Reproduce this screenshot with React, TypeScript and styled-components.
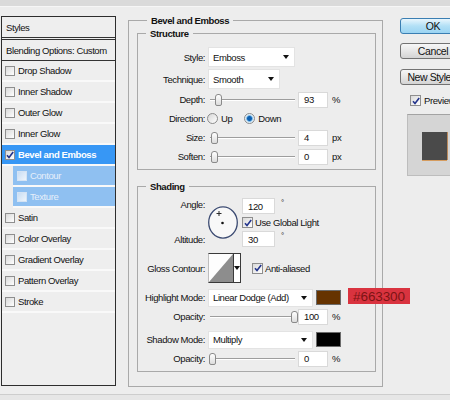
import React from 'react'
import styled, { createGlobalStyle } from 'styled-components'

const GlobalStyle = createGlobalStyle`
  html, body {
    margin: 0;
    padding: 0;
  }

  body {
    font-family: 'Liberation Sans', Arial, sans-serif;
    font-size: 9.5px;
    letter-spacing: -0.4px;
    color: #111;
    background: #ededed;
  }
`

const styleItems = [
  { label: 'Drop Shadow' },
  { label: 'Inner Shadow' },
  { label: 'Outer Glow' },
  { label: 'Inner Glow' },
  { label: 'Bevel and Emboss', active: true, checked: true },
  { label: 'Contour', sub: true },
  { label: 'Texture', sub: true },
  { label: 'Satin' },
  { label: 'Color Overlay' },
  { label: 'Gradient Overlay' },
  { label: 'Pattern Overlay' },
  { label: 'Stroke' },
]

function Check({ checked = false, size = 10, light = false }: { checked?: boolean; size?: number; light?: boolean }) {
  return (
    <CheckBox $size={size} $light={light}>
      {checked && (
        <svg width="8" height="8" viewBox="0 0 8 8">
          <path d="M1 4.3 L3 6.6 L7.2 1" fill="none" stroke="#23348c" strokeWidth="1.6" />
        </svg>
      )}
    </CheckBox>
  )
}

function Dropdown({ value, width, height = 20 }: { value: string; width: number; height?: number }) {
  return (
    <Select $w={width} $h={height}>
      <span>{value}</span>
      <Arrow />
    </Select>
  )
}

function SliderField({ thumb, value, unit }: { thumb: number; value: string; unit: string }) {
  return (
    <>
      <Slider>
        <Thumb $left={thumb} />
      </Slider>
      <Field $w={30}>{value}</Field>
      <Unit>{unit}</Unit>
    </>
  )
}

export default function App() {
  return (
    <>
      <GlobalStyle />
      <Dialog>
        <TopBand />
        <Body>
          <StylesPanel>
            <PanelHeader>Styles</PanelHeader>
            <BlendingRow>Blending Options: Custom</BlendingRow>
            {styleItems.map((item) => (
              <StyleRow key={item.label} $active={item.active} $sub={item.sub}>
                <Check checked={item.checked} light={item.sub} />
                <span>{item.label}</span>
              </StyleRow>
            ))}
          </StylesPanel>

          <Group $w={255} $h={373} $pad="0 6px 0 8px">
            <Legend $indent={10}>Bevel and Emboss</Legend>

            <Group $pad="7px 0 3px 0">
              <Legend $indent={8}>Structure</Legend>
              <Row $h={20}>
                <Label>Style:</Label>
                <Dropdown value="Emboss" width={87} />
              </Row>
              <Row $h={20} $mt={2}>
                <Label>Technique:</Label>
                <Dropdown value="Smooth" width={72} />
              </Row>
              <Row $mt={1}>
                <Label>Depth:</Label>
                <SliderField thumb={7} value="93" unit="%" />
              </Row>
              <Row>
                <Label>Direction:</Label>
                <RadioGroup>
                  <RadioOption>
                    <Radio />
                    Up
                  </RadioOption>
                  <RadioOption>
                    <Radio $on />
                    Down
                  </RadioOption>
                </RadioGroup>
              </Row>
              <Row>
                <Label>Size:</Label>
                <SliderField thumb={3} value="4" unit="px" />
              </Row>
              <Row>
                <Label>Soften:</Label>
                <SliderField thumb={3} value="0" unit="px" />
              </Row>
            </Group>

            <Group $pad="5px 0 3px 0" $mt={10}>
              <Legend $indent={8}>Shading</Legend>
              <AngleBlock>
                <AngleLabels>
                  <span>Angle:</span>
                  <span>Altitude:</span>
                </AngleLabels>
                <Dial width="31" height="33" viewBox="0 0 31 33">
                  <ellipse cx="15" cy="16.5" rx="14.3" ry="15.6" fill="#f8f8f8" stroke="#3d4c73" strokeWidth="1.3" />
                  <path d="M11 5v5M8.5 7.5h5" stroke="#2a2a2a" strokeWidth="1" />
                  <circle cx="14.5" cy="17" r="1.3" fill="#111" />
                </Dial>
                <AngleFields>
                  <InlineRow>
                    <Field $w={33}>120</Field>
                    <Degree>°</Degree>
                  </InlineRow>
                  <InlineRow>
                    <Check checked size={11} />
                    <span>Use Global Light</span>
                  </InlineRow>
                  <InlineRow>
                    <Field $w={33}>30</Field>
                    <Degree>°</Degree>
                  </InlineRow>
                </AngleFields>
              </AngleBlock>

              <Row $h={30} $mt={6}>
                <Label>Gloss Contour:</Label>
                <ContourBox>
                  <svg width="24" height="28" viewBox="0 0 24 28">
                    <rect width="24" height="28" fill="#fdfdfd" />
                    <polygon points="0,28 24,0 24,28" fill="#8d8d8d" />
                  </svg>
                  <ContourArrow>
                    <Arrow />
                  </ContourArrow>
                </ContourBox>
                <InlineRow>
                  <Check checked size={11} />
                  <span>Anti-aliased</span>
                </InlineRow>
              </Row>

              <Row $mt={5}>
                <Label>Highlight Mode:</Label>
                <Dropdown value="Linear Dodge (Add)" width={105} height={18} />
                <Swatch $color="#663300" />
                <ColorTag>#663300</ColorTag>
              </Row>
              <Row>
                <Label>Opacity:</Label>
                <SliderField thumb={83} value="100" unit="%" />
              </Row>
              <Row $mt={4}>
                <Label>Shadow Mode:</Label>
                <Dropdown value="Multiply" width={105} height={18} />
                <Swatch $color="#000000" />
              </Row>
              <Row>
                <Label>Opacity:</Label>
                <SliderField thumb={1} value="0" unit="%" />
              </Row>
            </Group>
          </Group>

          <Actions>
            <Button $primary>OK</Button>
            <Button $mt={9}>Cancel</Button>
            <Button $mt={10}>New Style...</Button>
            <PreviewToggle>
              <Check checked size={11} />
              <span>Preview</span>
            </PreviewToggle>
            <PreviewBox>
              <PreviewSquare />
            </PreviewBox>
          </Actions>
        </Body>
        <BottomBand />
      </Dialog>
    </>
  )
}

const Dialog = styled.div`
  display: flex;
  flex-direction: column;
  width: 450px;
  height: 400px;
  overflow: hidden;
  background: #ededed;
`

const TopBand = styled.div`
  height: 6px;
  flex-shrink: 0;
  background: #dadada;
  border-bottom: 1px solid #f6f6f6;
`

const BottomBand = styled.div`
  height: 6px;
  flex-shrink: 0;
  box-sizing: border-box;
  border-top: 1px solid #cdcdcd;
  background: #e6e6e6;
`

const Body = styled.div`
  display: flex;
  align-items: flex-start;
  height: 387px;
  flex-shrink: 0;
`

const StylesPanel = styled.div`
  flex-shrink: 0;
  width: 115px;
  height: 370px;
  margin: 9px 0 0 1px;
  box-sizing: border-box;
  border: 1px solid #2d2d2d;
  background: #eeeeee;
`

const PanelHeader = styled.div`
  display: flex;
  align-items: center;
  height: 20px;
  padding-left: 4px;
  border-bottom: 3px double #333;
`

const BlendingRow = styled.div`
  display: flex;
  align-items: center;
  height: 20px;
  padding-left: 4px;
  border-bottom: 1px solid #333;
`

const StyleRow = styled.div<{ $active?: boolean; $sub?: boolean }>`
  display: flex;
  align-items: center;
  gap: 3px;
  height: 21px;
  box-sizing: border-box;
  margin-left: ${(p) => (p.$sub ? '11px' : '0')};
  padding-left: ${(p) => (p.$sub ? '4px' : '3px')};
  border-bottom: 2px solid #f9f9f9;
  background: ${(p) => (p.$active ? '#3797f5' : p.$sub ? '#8fc0f1' : 'transparent')};
  color: ${(p) => (p.$active ? '#fff' : p.$sub ? '#e6effa' : '#111')};
  font-weight: ${(p) => (p.$active ? 'bold' : 'normal')};
`

const CheckBox = styled.span<{ $size: number; $light?: boolean }>`
  display: flex;
  align-items: center;
  justify-content: center;
  flex-shrink: 0;
  width: ${(p) => p.$size}px;
  height: ${(p) => p.$size}px;
  box-sizing: border-box;
  border: 1px solid ${(p) => (p.$light ? '#d4e3f4' : '#8e8e8e')};
  background: ${(p) =>
    p.$light ? 'linear-gradient(135deg, #c9ddf3, #eef5fc)' : 'linear-gradient(135deg, #d9d9d9, #ffffff)'};
`

const Group = styled.fieldset<{ $w?: number; $h?: number; $pad: string; $mt?: number }>`
  flex-shrink: 0;
  min-width: 0;
  width: ${(p) => (p.$w ? `${p.$w}px` : 'auto')};
  height: ${(p) => (p.$h ? `${p.$h}px` : 'auto')};
  margin: ${(p) => (p.$w ? '7px 0 0 12px' : `${p.$mt ?? 0}px 0 0 0`)};
  padding: ${(p) => p.$pad};
  box-sizing: border-box;
  border: 1px solid #a9a9a9;
`

const Legend = styled.legend<{ $indent: number }>`
  margin-left: ${(p) => p.$indent}px;
  padding: 0 4px;
  font-weight: bold;
  line-height: 13px;
`

const Row = styled.div<{ $h?: number; $mt?: number }>`
  display: flex;
  align-items: center;
  height: ${(p) => p.$h ?? 19}px;
  margin-top: ${(p) => p.$mt ?? 0}px;
`

const Label = styled.span`
  flex-shrink: 0;
  width: 67px;
  margin-right: 3px;
  text-align: right;
`

const Select = styled.div<{ $w: number; $h: number }>`
  display: flex;
  align-items: center;
  justify-content: space-between;
  flex-shrink: 0;
  width: ${(p) => p.$w}px;
  height: ${(p) => p.$h}px;
  box-sizing: border-box;
  padding: 0 5px 0 4px;
  background: #fff;
  border: 1px solid #e3e3e3;
`

const Arrow = styled.span`
  width: 0;
  height: 0;
  border-left: 3.5px solid transparent;
  border-right: 3.5px solid transparent;
  border-top: 4px solid #111;
`

const Field = styled.div<{ $w: number }>`
  display: flex;
  align-items: center;
  flex-shrink: 0;
  width: ${(p) => p.$w}px;
  height: 16px;
  box-sizing: border-box;
  padding-left: 5px;
  background: #fff;
  border: 1px solid #d9d9d9;
`

const Slider = styled.div`
  position: relative;
  flex-shrink: 0;
  width: 87px;
  height: 14px;
  margin-right: 3px;

  &::before {
    content: '';
    position: absolute;
    left: 2px;
    right: 0;
    top: 6px;
    height: 1px;
    background: #9d9d9d;
    box-shadow: 0 1px 0 #ffffff;
  }
`

const Thumb = styled.span<{ $left: number }>`
  position: absolute;
  top: 1px;
  left: ${(p) => p.$left}px;
  width: 7px;
  height: 12px;
  box-sizing: border-box;
  border: 1px solid #8a8a8a;
  border-radius: 3px 3px 2px 2px;
  background: linear-gradient(#ffffff, #dcdcdc);
`

const Unit = styled.span`
  margin-left: 4px;
`

const Degree = styled.span`
  align-self: flex-start;
  margin-left: 4px;
  font-size: 8px;
`

const RadioGroup = styled.div`
  display: flex;
  gap: 12px;
  margin-left: -1px;
`

const RadioOption = styled.span`
  display: flex;
  align-items: center;
  gap: 3px;
`

const Radio = styled.span<{ $on?: boolean }>`
  width: 11px;
  height: 11px;
  box-sizing: border-box;
  border-radius: 50%;
  border: 1px solid #8b8b8b;
  background: ${(p) =>
    p.$on
      ? 'radial-gradient(circle, #0c5fb0 0 2px, #4d9ad8 2.6px, #cfe6f6 3.6px, #f4f9fc 5px)'
      : 'linear-gradient(135deg, #d6d6d6, #ffffff)'};
`

const AngleBlock = styled.div`
  display: flex;
  align-items: center;
  height: 49px;
`

const AngleLabels = styled.div`
  display: flex;
  flex-direction: column;
  justify-content: space-between;
  align-self: stretch;
  flex-shrink: 0;
  width: 67px;
  padding: 0 0 1px 0;
  margin-right: 3px;
  box-sizing: border-box;
  text-align: right;
  line-height: 13px;
`

const Dial = styled.svg`
  flex-shrink: 0;
  margin-right: 3px;
`

const AngleFields = styled.div`
  display: flex;
  flex-direction: column;
  justify-content: space-between;
  align-self: stretch;
`

const InlineRow = styled.div`
  display: flex;
  align-items: center;
  gap: 2px;
`

const ContourBox = styled.div`
  display: flex;
  flex-shrink: 0;
  width: 33px;
  height: 30px;
  margin-right: 11px;
  box-sizing: border-box;
  border: 1px solid #3a3a3a;
  border-left-color: #bdbdbd;
  background: #fff;
`

const ContourArrow = styled.span`
  display: flex;
  align-items: center;
  justify-content: center;
  flex: 1;
  border-left: 1px solid #3a3a3a;
`

const Swatch = styled.span<{ $color: string }>`
  flex-shrink: 0;
  width: 25px;
  height: 15px;
  margin-left: 3px;
  box-sizing: border-box;
  border: 1px solid #6b6b6b;
  background: ${(p) => p.$color};
`

const ColorTag = styled.span`
  display: flex;
  align-items: center;
  justify-content: center;
  flex-shrink: 0;
  width: 62px;
  height: 16px;
  margin: -3px 0 0 7px;
  background: #d9333f;
  color: #7d1414;
  font-size: 13.5px;
  letter-spacing: -0.1px;
`

const Actions = styled.div`
  display: flex;
  flex-direction: column;
  flex-shrink: 0;
  width: 66px;
  margin: 11px 0 0 17px;
`

const Button = styled.div<{ $primary?: boolean; $mt?: number }>`
  display: flex;
  align-items: center;
  justify-content: center;
  height: 16px;
  margin-top: ${(p) => p.$mt ?? 0}px;
  box-sizing: border-box;
  border-radius: 3px;
  border: 1px solid ${(p) => (p.$primary ? '#3a7eb2' : '#727272')};
  background: ${(p) =>
    p.$primary ? 'linear-gradient(#e9f6fd, #b2e0f6 50%, #9bd4f2)' : 'linear-gradient(#f7f7f7, #e6e6e6 50%, #d4d4d4)'};
  font-size: 10.5px;
`

const PreviewToggle = styled.div`
  display: flex;
  align-items: center;
  gap: 3px;
  height: 11px;
  margin: 10px 0 0 10px;
`

const PreviewBox = styled.div`
  width: 60px;
  height: 62px;
  margin: 8px 0 0 7px;
  padding: 17px 0 0 14px;
  box-sizing: border-box;
  border: 1px solid #bdbdbd;
  border-top-color: #a3a3a3;
  background: #d5d5d5;
`

const PreviewSquare = styled.div`
  width: 25px;
  height: 28px;
  background: #4a4a4a;
  box-shadow: 0 1px 0 #d59c5f, 1px 0 0 #bb8a5c;
`
